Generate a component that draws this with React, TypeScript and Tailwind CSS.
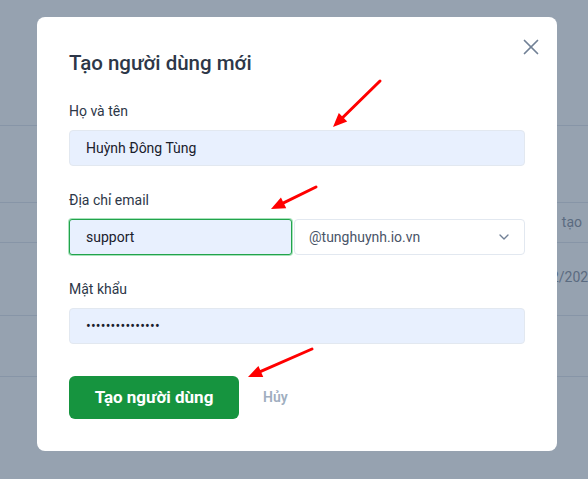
import { X, ChevronDown } from 'lucide-react'

function Arrow({ x1, y1, x2, y2 }: { x1: number; y1: number; x2: number; y2: number }) {
  // line ends a bit before the tip so the head stays sharp
  const dx = x2 - x1
  const dy = y2 - y1
  const len = Math.hypot(dx, dy)
  const ux = dx / len
  const uy = dy / len
  const headLen = 14
  const headW = 6
  const bx = x2 - ux * headLen
  const by = y2 - uy * headLen
  const p1 = `${bx - uy * headW},${by + ux * headW}`
  const p2 = `${bx + uy * headW},${by - ux * headW}`
  return (
    <g>
      <line x1={x1} y1={y1} x2={bx} y2={by} stroke="#ff0000" strokeWidth={3} strokeLinecap="round" />
      <polygon points={`${x2},${y2} ${p1} ${p2}`} fill="#ff0000" />
    </g>
  )
}

export default function App() {
  return (
    <div
      className="relative h-[479px] w-[588px] overflow-hidden bg-[#96a2b0]"
      style={{ fontFamily: 'Roboto, "Open Sans", sans-serif' }}
    >
      {/* Bảng phía sau lớp phủ */}
      <div className="pt-[125px] text-[14px] text-[#5b6b80]">
        <div className="h-[77px] border-t border-[#8795a7]" />
        <div className="flex h-[40px] items-center justify-end border-t border-[#8795a7] pr-[6px]">
          <span>tạo</span>
        </div>
        <div className="flex h-[73px] items-start justify-end border-t border-[#8795a7] pt-[24px]">
          <span className="-mr-[8px]">2/2024</span>
        </div>
        <div className="h-[61px] border-t border-[#8795a7]" />
        <div className="border-t border-[#8795a7]" />
      </div>

      {/* Hộp thoại tạo người dùng */}
      <div className="absolute left-[37px] top-[17px] w-[520px] rounded-lg bg-white px-8 pt-8 pb-8">
        <button className="absolute right-[13px] top-[17px] text-[#718096]">
          <X size={26} strokeWidth={1.6} />
        </button>

        <h2 className="text-[20.5px] font-medium leading-7 text-[#2d3748]">Tạo người dùng mới</h2>

        <div className="mt-6">
          <label className="mb-[9px] block text-[14px] leading-5 text-[#2d3748]">Họ và tên</label>
          <div className="flex h-[36px] items-center rounded border border-[#e2e8f0] bg-[#e8f0fe] px-4 text-[14px] text-[#1a202c]">
            Huỳnh Đông Tùng
          </div>
        </div>

        <div className="mt-6">
          <label className="mb-[9px] block text-[14px] leading-5 text-[#2d3748]">Địa chỉ email</label>
          <div className="flex gap-[2px]">
            <div className="flex h-[36px] w-[223px] items-center rounded-[3px] border border-[#22a34b] bg-[#e8f0fe] px-4 text-[14px] text-[#1a202c] shadow-[0_0_0_1px_#a7e3bb]">
              support
            </div>
            <div className="flex h-[36px] flex-1 items-center justify-between rounded border border-[#e2e8f0] bg-white pl-[14px] pr-[12px] text-[14px] text-[#4a5568]">
              <span>@tunghuynh.io.vn</span>
              <ChevronDown size={16} strokeWidth={2} className="text-[#718096]" />
            </div>
          </div>
        </div>

        <div className="mt-6">
          <label className="mb-[9px] block text-[14px] leading-5 text-[#2d3748]">Mật khẩu</label>
          <div className="flex h-[36px] items-center rounded border border-[#e2e8f0] bg-[#e8f0fe] px-4 text-[14px] tracking-[0.2px] text-[#1a202c]">
            •••••••••••••••
          </div>
        </div>

        <div className="mt-8 flex items-center">
          <button className="h-[43px] w-[170px] rounded-md bg-[#16943f] text-[17px] font-bold text-white">
            Tạo người dùng
          </button>
          <button className="ml-6 text-[14px] font-semibold text-[#a0aec0]">Hủy</button>
        </div>
      </div>

      {/* Mũi tên chú thích */}
      <svg className="pointer-events-none absolute inset-0" width={588} height={479}>
        <Arrow x1={380} y1={81} x2={333} y2={127} />
        <Arrow x1={316} y1={187} x2={271} y2={209} />
        <Arrow x1={312} y1={349} x2={248} y2={377} />
      </svg>
    </div>
  )
}
